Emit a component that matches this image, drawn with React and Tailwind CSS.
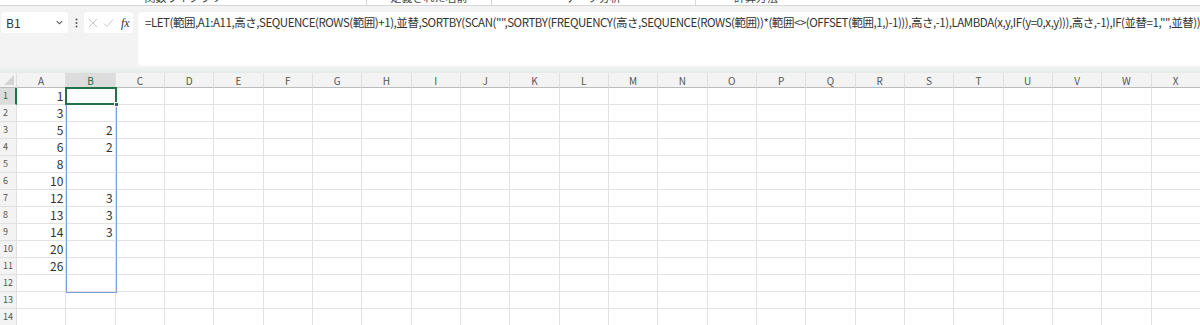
import React from 'react';

const COLS = ['A','B','C','D','E','F','G','H','I','J','K','L','M','N','O','P','Q','R','S','T','U','V','W','X'];
const colA = [1, 3, 5, 6, 8, 10, 12, 13, 14, 20, 26];
const colB = { 3: 2, 4: 2, 7: 3, 8: 3, 9: 3 };
const FORMULA = '=LET(範囲,A1:A11,高さ,SEQUENCE(ROWS(範囲)+1),並替,SORTBY(SCAN("",SORTBY(FREQUENCY(高さ,SEQUENCE(ROWS(範囲))*(範囲<>(OFFSET(範囲,1,)-1))),高さ,-1),LAMBDA(x,y,IF(y=0,x,y))),高さ,-1),IF(並替=1,"",並替))';

const font = { fontFamily: '"Noto Sans CJK JP", "Noto Sans", sans-serif' };

// bottom of the ribbon: only the lower edge of the group labels peeks out
const groups = [
  { label: '関数ライブラリ', w: 'w-[367px]' },
  { label: '定義された名前', w: 'w-[125px]' },
  { label: 'データ分析', w: 'w-[204px]' },
  { label: '計算方法', w: 'w-[120px]' },
];

const Ribbon = () => (
  <div className="h-[6px] bg-white border-b border-[#d6d6d6] overflow-hidden flex text-[11px] leading-[14px] text-[#444]">
    {groups.map((g, i) => (
      <div key={g.label} className={`${g.w} flex justify-center ${i < groups.length - 1 ? 'border-r border-[#d6d6d6]' : ''}`}>
        <span className="-mt-[10px] whitespace-nowrap">{g.label}</span>
      </div>
    ))}
  </div>
);

const FormulaBar = () => (
  <div className="flex items-start bg-[#f3f3f3] pt-[6px] pl-[1px] h-[61px]">
    <div className="w-[67px] h-[21px] bg-white rounded-[4px] flex items-center justify-between pl-[5px] pr-[4px] text-[12px] text-[#333]">
      <span>B1</span>
      <svg width="9" height="9" viewBox="0 0 10 10"><path d="M2 3.5 L5 6.5 L8 3.5" fill="none" stroke="#555" strokeWidth="1.2" /></svg>
    </div>
    <div className="w-[16px] h-[21px] flex items-center justify-center">
      <svg width="3" height="10" viewBox="0 0 3 10"><circle cx="1.5" cy="1.5" r="1" fill="#555" /><circle cx="1.5" cy="5" r="1" fill="#555" /><circle cx="1.5" cy="8.5" r="1" fill="#555" /></svg>
    </div>
    <div className="w-[49px] h-[21px] bg-white rounded-[4px] flex items-center gap-[5px] pl-[4px]">
      <svg width="10" height="10" viewBox="0 0 10 10"><path d="M1 1 L9 9 M9 1 L1 9" stroke="#c8c8c8" strokeWidth="1" /></svg>
      <svg width="11" height="10" viewBox="0 0 11 10"><path d="M1 5.5 L4 8.5 L10 1.5" fill="none" stroke="#c8c8c8" strokeWidth="1" /></svg>
      <span className="text-[12px] italic text-[#333] ml-[2px]" style={{ fontFamily: '"Liberation Serif", serif' }}>fx</span>
    </div>
    <div className="ml-[5px] flex-1 h-[54px] bg-white rounded-l-[4px] pl-[7px] pt-[2px] overflow-hidden whitespace-nowrap text-[11.5px] text-[#333] tracking-[-0.45px]">
      {FORMULA}
    </div>
  </div>
);

const Grid = () => {
  const rows = Array.from({ length: 14 }, (_, i) => i + 1);
  return (
    <div className="relative">
      <div className="grid grid-cols-[17px_repeat(24,49.33px)]">
        <div className="h-[15px] bg-[#f3f3f3] border-b border-[#bcbcbc] border-r border-r-[#e0e0e0] flex items-end justify-end p-[2px]">
          <svg width="10" height="10" viewBox="0 0 10 10"><path d="M10 0 L10 10 L0 10 Z" fill="#d4d4d4" /></svg>
        </div>
        {COLS.map((c) => (
          <div key={c} className={`h-[15px] flex items-center justify-center text-[10px] border-r border-[#e0e0e0] border-b border-b-[#bcbcbc] ${c === 'B' ? 'bg-[#dcdcdc] text-[#1e6b45]' : 'bg-[#f3f3f3] text-[#555]'}`}>{c}</div>
        ))}
        {rows.map((r) => (
          <React.Fragment key={r}>
            <div className={`h-[17px] flex items-center pl-[3px] text-[9px] border-b border-[#e0e0e0] ${r === 1 ? 'bg-[#dcdcdc] text-[#1e6b45] border-r-2 border-r-[#217346]' : 'bg-[#f3f3f3] text-[#555] border-r border-r-[#e0e0e0]'}`}>{r}</div>
            {COLS.map((c) => {
              let v = '';
              if (c === 'A' && r <= colA.length) v = colA[r - 1];
              if (c === 'B' && colB[r]) v = colB[r];
              return (
                <div key={c} className="h-[17px] flex items-center justify-end pr-[2px] text-[12px] text-[#333] bg-white border-r border-b border-[#e2e2e2]">{v}</div>
              );
            })}
          </React.Fragment>
        ))}
      </div>
      {/* spill range + active cell overlays */}
      <div className="absolute left-[66px] top-[31px] w-[51px] h-[189px] border border-[#7a9edc] pointer-events-none" />
      <div className="absolute left-[65px] top-[14px] w-[52px] h-[18px] border-2 border-[#217346] pointer-events-none" />
      <div className="absolute left-[114px] top-[29px] w-[5px] h-[5px] bg-[#217346] border border-white" />
    </div>
  );
};

export default function App() {
  return (
    <div className="w-[1200px] h-[325px] overflow-hidden bg-white" style={font}>
      <Ribbon />
      <FormulaBar />
      <div className="h-[6px] bg-gradient-to-b from-[#f3f3f3] to-[#e6ebe7]" />
      <Grid />
    </div>
  );
}
